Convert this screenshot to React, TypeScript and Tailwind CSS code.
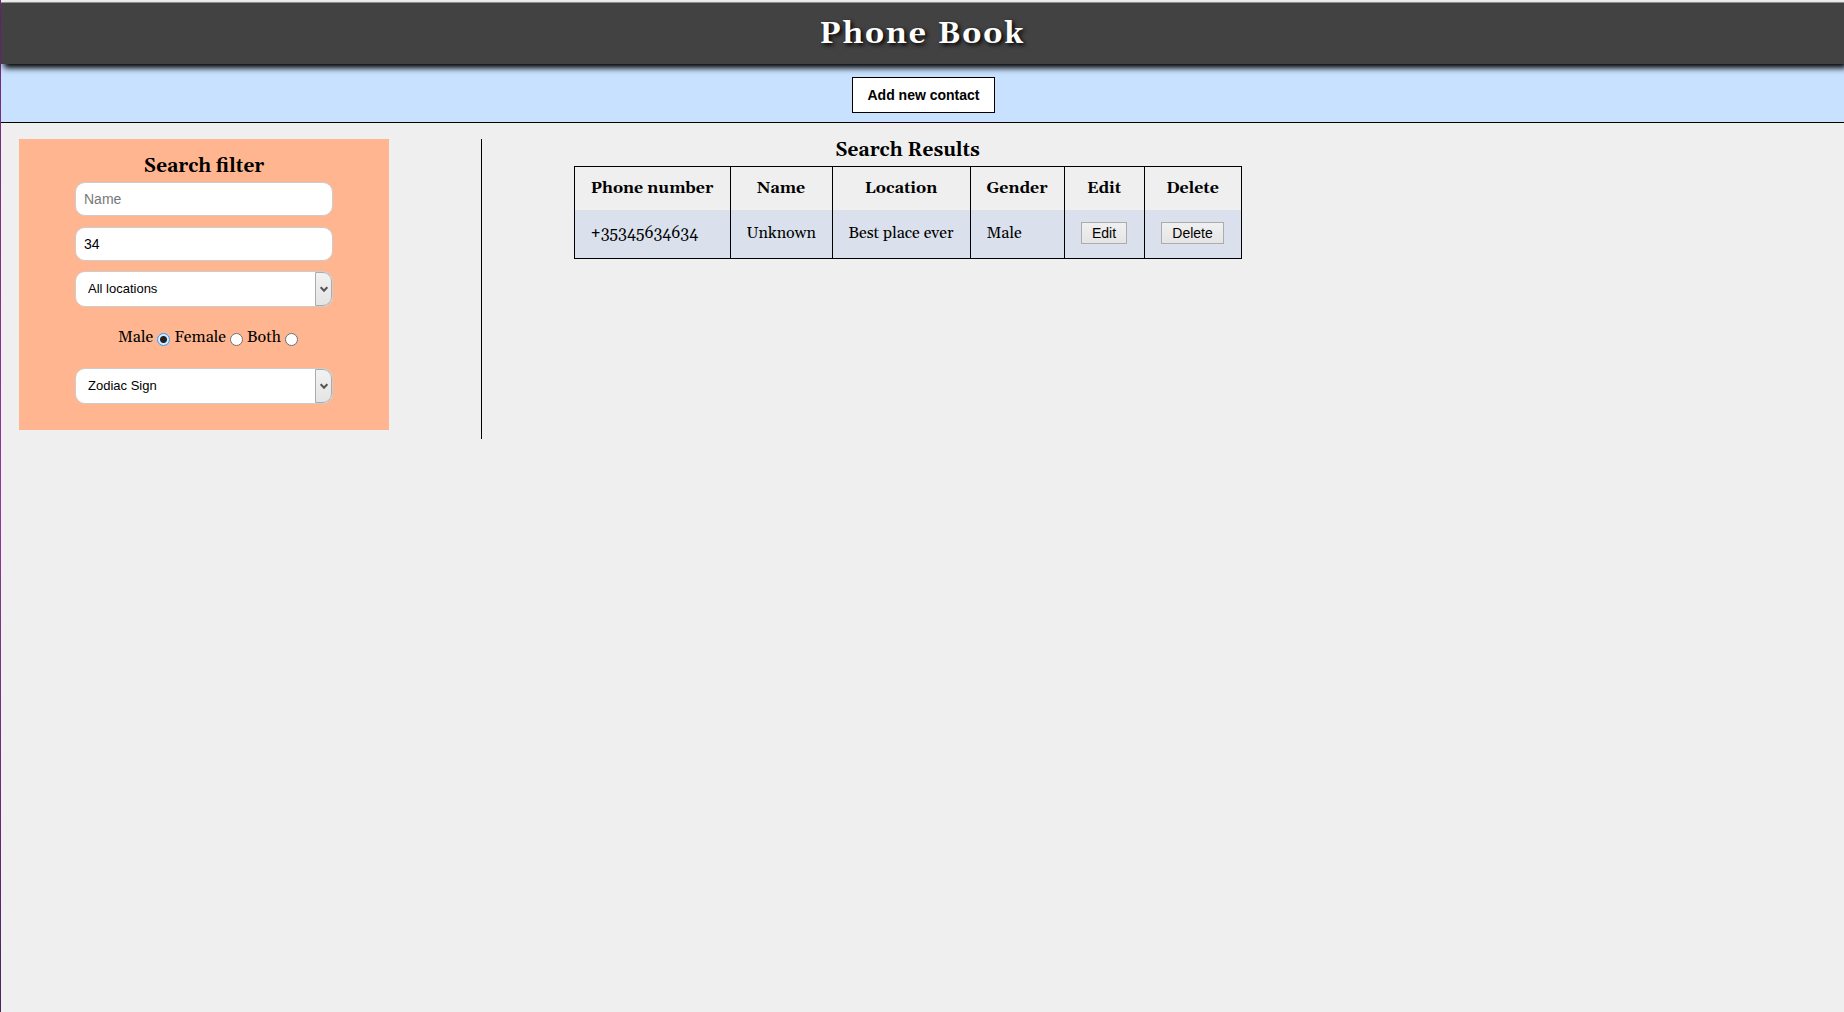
import { useState, type ReactNode } from "react";

const SERIF = "font-['Georgia','Gelasio','Liberation_Serif',serif]";
const FIELD =
  "block w-full rounded-[10px] border border-[#ccc] bg-white font-['Liberation_Sans',Arial,sans-serif] leading-5 text-black outline-none placeholder:text-[#777]";

function SelectField({ label, children }: { label: string; children: ReactNode }) {
  return (
    <div className="relative overflow-hidden rounded-[10px]">
      <select aria-label={label} className={`${FIELD} h-9 appearance-none pr-6 pl-3 text-[13px]`}>
        {children}
      </select>
      <span className="pointer-events-none absolute inset-y-px right-px flex w-[17px] items-center justify-center rounded-r-[9px] border border-[#acacac] bg-linear-to-b from-[#f2f2f2] to-[#e4e4e4]">
        <svg width="8" height="7" viewBox="0 0 8 7" fill="none" stroke="#555" strokeWidth="2">
          <path d="M0.7 1.2 L4 4.7 L7.3 1.2" />
        </svg>
      </span>
    </div>
  );
}

function RowButton({ children }: { children: ReactNode }) {
  return (
    <button
      type="button"
      className="mx-auto block h-[22px] border border-[#acacac] bg-linear-to-b from-[#f0f0f0] to-[#e5e5e5] px-2.5 font-['Liberation_Sans',Arial,sans-serif] text-[14px] leading-5"
    >
      {children}
    </button>
  );
}

const columns = [
  { title: "Phone number", width: "w-[156px]" },
  { title: "Name", width: "w-[102px]" },
  { title: "Location", width: "w-[138px]" },
  { title: "Gender", width: "w-[94px]" },
  { title: "Edit", width: "w-[80px]" },
  { title: "Delete", width: "w-[97px]" },
];

const contacts = [
  { phone: "+35345634634", name: "Unknown", location: "Best place ever", gender: "Male" },
];

const genders = ["Male", "Female", "Both"];

export default function App() {
  const [gender, setGender] = useState("Male");
  const [name, setName] = useState("");
  const [phone, setPhone] = useState("34");

  return (
    <div className={`flex min-h-screen bg-[#efefef] text-black ${SERIF}`}>
      <div className="w-px shrink-0 bg-linear-to-b from-[#702878] via-[#8d3a98] to-[#4c2458]" />
      <div className="min-w-0 flex-1">
        <div className="h-[3px] border-b border-[#999]" />
        <header className="relative flex h-[61px] items-center justify-center bg-[#424242] pt-px shadow-[3px_4px_6px_#000]">
          <h1 className="text-[30px] leading-10 font-bold tracking-[2px] text-white [text-shadow:2px_2px_4px_#000]">
            Phone Book
          </h1>
        </header>
        <nav className="flex h-[59px] items-start justify-center border-b border-black bg-[#c8e1ff] pt-[13px] pl-0.5">
          <button
            type="button"
            className="h-9 border border-black bg-white px-3.5 font-['Liberation_Sans',Arial,sans-serif] text-[14px] font-bold"
          >
            Add new contact
          </button>
        </nav>

        <main className="flex items-start pt-4 pl-[18px]">
          <form className="mr-[5%] flex w-[370px] shrink-0 flex-col items-center bg-[#ffb690] px-14 pt-3.5 pb-[26px]">
            <h2 className="mb-0.5 text-[19px] leading-[27px] font-bold">Search filter</h2>
            <div className="w-full">
              <input
                aria-label="Name"
                placeholder="Name"
                value={name}
                onChange={(e) => setName(e.target.value)}
                className={`${FIELD} mb-[11px] h-[34px] px-2 text-[14px]`}
              />
              <input
                aria-label="Phone number"
                value={phone}
                onChange={(e) => setPhone(e.target.value)}
                className={`${FIELD} mb-2.5 h-[34px] px-2 text-[14px]`}
              />
              <SelectField label="Location">
                <option>All locations</option>
              </SelectField>
              <div className="flex h-[61px] items-center justify-center gap-1 pb-0.5 pl-2">
                {genders.map((g) => (
                  <label key={g} className="flex items-center gap-1 text-[16px] leading-6">
                    {g}
                    <input
                      type="radio"
                      name="gender"
                      checked={gender === g}
                      onChange={() => setGender(g)}
                      className="mt-1.5 size-[13px] appearance-none rounded-full border border-[#707070] bg-white checked:border-[#3399ff] checked:bg-[radial-gradient(circle,#222_3px,#d5eaff_4px)]"
                    />
                  </label>
                ))}
              </div>
              <SelectField label="Zodiac sign">
                <option>Zodiac Sign</option>
              </SelectField>
            </div>
          </form>

          <section className="ml-px min-h-[300px] flex-1 border-l border-black pl-[5%]">
            <table className="border-collapse border border-black text-[16px] leading-6 whitespace-nowrap">
              <caption className="pt-px pb-1.5 text-[19px] leading-5 font-bold">Search Results</caption>
              <thead>
                <tr className="h-[43px]">
                  {columns.map((c) => (
                    <th key={c.title} scope="col" className={`${c.width} border-x border-black font-bold`}>
                      {c.title}
                    </th>
                  ))}
                </tr>
              </thead>
              <tbody>
                {contacts.map((c) => (
                  <tr key={c.phone} className="h-[49px] bg-[#dae1ec]">
                    <td className="border-x border-black pb-px pl-4">{c.phone}</td>
                    <td className="border-x border-black pb-px pl-4">{c.name}</td>
                    <td className="border-x border-black pb-px pl-4">{c.location}</td>
                    <td className="border-x border-black pb-px pl-4">{c.gender}</td>
                    <td className="border-x border-black pb-px">
                      <RowButton>Edit</RowButton>
                    </td>
                    <td className="border-x border-black pb-px">
                      <RowButton>Delete</RowButton>
                    </td>
                  </tr>
                ))}
              </tbody>
            </table>
          </section>
        </main>
      </div>
    </div>
  );
}
